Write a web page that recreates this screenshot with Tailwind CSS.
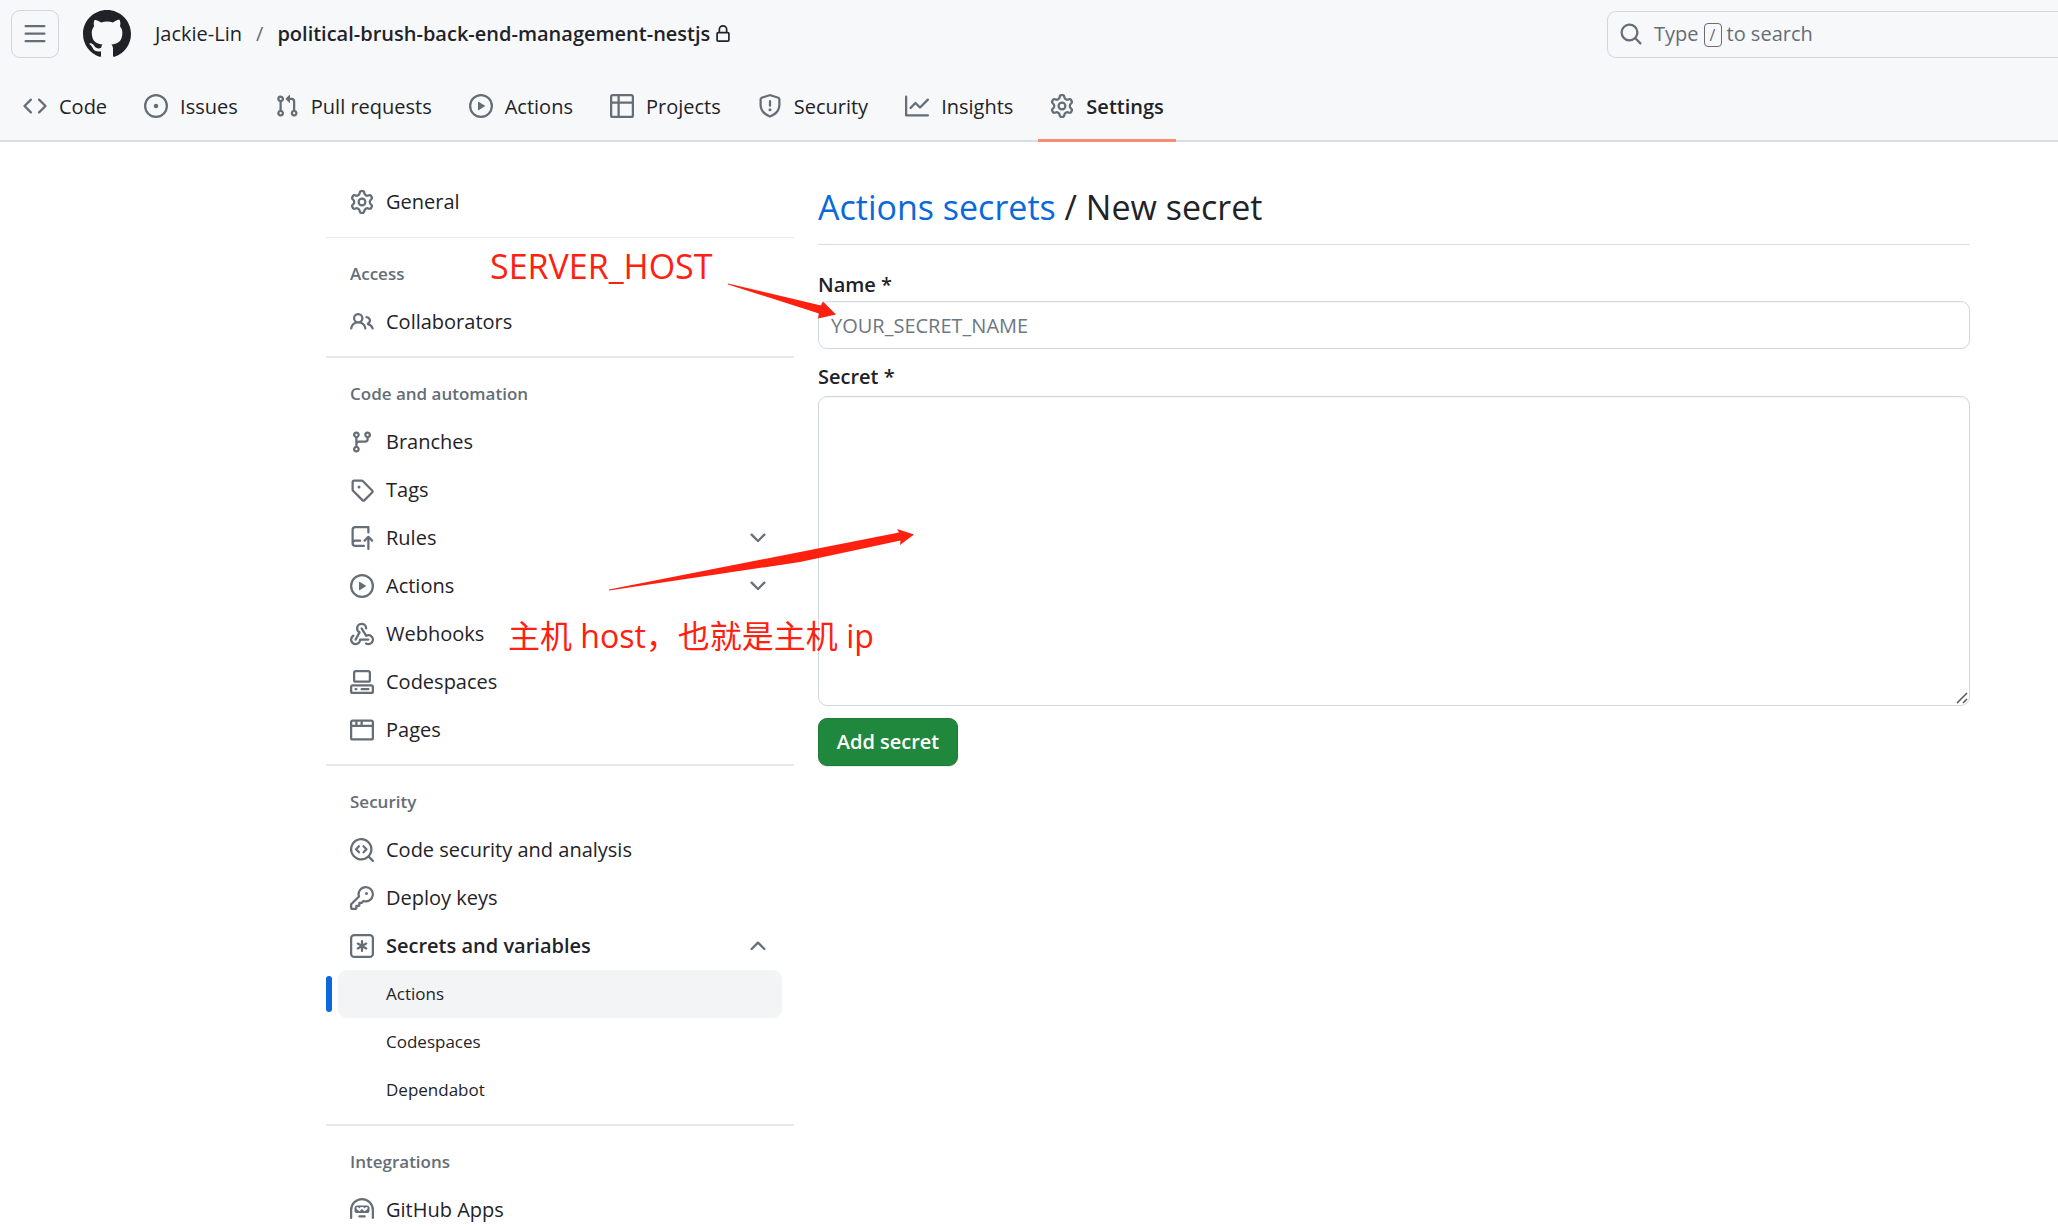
<!DOCTYPE html>
<html lang="en">
<head>
<meta charset="utf-8">
<title>Actions secrets / New secret</title>
<script src="https://cdn.jsdelivr.net/npm/@tailwindcss/browser@4"></script>
</head>
<body class="min-h-screen bg-white font-['Open_Sans','Noto_Sans_CJK_SC',sans-serif] text-[20px] leading-[30px] text-[#1f2328]">
<svg class="hidden" aria-hidden="true">
  <symbol id="bars" viewBox="0 0 16 16"><path d="M1 2.75A.75.75 0 0 1 1.75 2h12.5a.75.75 0 0 1 0 1.500H1.750A.75.75 0 0 1 1 2.750Zm0 5A.75.75 0 0 1 1.750 7h12.500a.75.75 0 0 1 0 1.500H1.750A.75.75 0 0 1 1 7.750ZM1.750 12h12.500a.75.75 0 0 1 0 1.500H1.750a.75.75 0 0 1 0-1.500Z"/></symbol>
  <symbol id="mark" viewBox="0 0 16 16"><path d="M8 0c4.420 0 8 3.580 8 8a8.013 8.013 0 0 1-5.450 7.590c-.4.080-.55-.17-.55-.38 0-.27.01-1.130.01-2.200 0-.75-.25-1.230-.54-1.480 1.780-.2 3.650-.88 3.650-3.950 0-.88-.31-1.590-.82-2.150.08-.2.36-1.020-.08-2.120 0 0-.67-.22-2.200.82-.64-.18-1.320-.27-2-.27-.68 0-1.360.09-2 .27-1.530-1.030-2.200-.82-2.200-.82-.44 1.100-.16 1.920-.08 2.120-.51.56-.82 1.280-.82 2.150 0 3.060 1.860 3.750 3.640 3.950-.23.2-.44.55-.51 1.070-.46.21-1.610.55-2.330-.66-.15-.24-.6-.83-1.230-.82-.67.01-.27.38.01.53.34.19.73.9.82 1.130.16.45.68 1.310 2.690.94 0 .67.01 1.300.01 1.490 0 .21-.15.45-.55.38A7.995 7.995 0 0 1 0 8c0-4.420 3.580-8 8-8Z"/></symbol>
  <symbol id="code" viewBox="0 0 16 16"><path d="m11.28 3.22 4.250 4.250a.75.75 0 0 1 0 1.060l-4.250 4.250a.749.749 0 0 1-1.275-.326.749.749 0 0 1 .215-.734L13.940 8l-3.720-3.720a.749.749 0 0 1 .326-1.275.749.749 0 0 1 .734.215Zm-6.560 0a.751.751 0 0 1 1.042.018.751.751 0 0 1 .018 1.042L2.060 8l3.720 3.720a.749.749 0 0 1-.326 1.275.749.749 0 0 1-.734-.215L.47 8.530a.75.75 0 0 1 0-1.060Z"/></symbol>
  <symbol id="issue" viewBox="0 0 16 16"><path d="M8 9.500a1.500 1.500 0 1 0 0-3 1.500 1.500 0 0 0 0 3Z"/><path d="M8 0a8 8 0 1 1 0 16A8 8 0 0 1 8 0ZM1.500 8a6.500 6.500 0 1 0 13 0 6.500 6.500 0 0 0-13 0Z"/></symbol>
  <symbol id="pr" viewBox="0 0 16 16"><path d="M1.500 3.250a2.250 2.250 0 1 1 3 2.122v5.256a2.251 2.251 0 1 1-1.500 0V5.372A2.250 2.250 0 0 1 1.500 3.250Zm5.677-.177L9.573.677A.25.25 0 0 1 10 .854V2.500h1A2.500 2.500 0 0 1 13.500 5v5.628a2.251 2.251 0 1 1-1.500 0V5a1 1 0 0 0-1-1h-1v1.646a.25.25 0 0 1-.427.177L7.177 3.427a.25.25 0 0 1 0-.354ZM3.750 2.500a.75.75 0 1 0 0 1.500.75.75 0 0 0 0-1.500Zm0 9.500a.75.75 0 1 0 0 1.500.75.75 0 0 0 0-1.500Zm8.250.75a.75.75 0 1 0 1.500 0 .75.75 0 0 0-1.500 0Z"/></symbol>
  <symbol id="play" viewBox="0 0 16 16"><path d="M8 0a8 8 0 1 1 0 16A8 8 0 0 1 8 0ZM1.500 8a6.500 6.500 0 1 0 13 0 6.500 6.500 0 0 0-13 0Zm4.879-2.773 4.264 2.559a.25.25 0 0 1 0 .428l-4.264 2.559A.25.25 0 0 1 6 10.559V5.442a.25.25 0 0 1 .379-.215Z"/></symbol>
  <symbol id="table" viewBox="0 0 16 16"><path d="M0 1.750C0 .784.784 0 1.750 0h12.500C15.216 0 16 .784 16 1.750v12.500A1.750 1.750 0 0 1 14.250 16H1.750A1.750 1.750 0 0 1 0 14.250ZM6.500 6.500v8h7.750a.25.25 0 0 0 .25-.25V6.500Zm8-1.500V1.750a.25.25 0 0 0-.25-.25H6.500V5Zm-13 1.500v7.750c0 .138.112.25.25.25H5v-8ZM5 5V1.500H1.750a.25.25 0 0 0-.25.25V5Z"/></symbol>
  <symbol id="shield" viewBox="0 0 16 16"><path d="M7.467.133a1.748 1.748 0 0 1 1.066 0l5.250 1.680A1.750 1.750 0 0 1 15 3.480V7c0 1.566-.32 3.182-1.303 4.682-.983 1.498-2.585 2.813-5.032 3.855a1.697 1.697 0 0 1-1.330 0c-2.447-1.042-4.049-2.357-5.032-3.855C1.320 10.182 1 8.566 1 7V3.480a1.755 1.755 0 0 1 1.217-1.667Zm.61 1.429a.25.25 0 0 0-.153 0l-5.250 1.680a.25.25 0 0 0-.174.238V7c0 1.358.275 2.666 1.057 3.860.784 1.194 2.121 2.340 4.366 3.297a.196.196 0 0 0 .154 0c2.245-.956 3.582-2.104 4.366-3.298C13.225 9.666 13.500 8.360 13.500 7V3.480a.251.251 0 0 0-.174-.237l-5.250-1.680ZM8.750 4.750v3a.75.75 0 0 1-1.500 0v-3a.75.75 0 0 1 1.500 0ZM9 10.500a1 1 0 1 1-2 0 1 1 0 0 1 2 0Z"/></symbol>
  <symbol id="graph" viewBox="0 0 16 16"><path d="M1.500 1.750V13.500h13.750a.75.75 0 0 1 0 1.500H.75a.75.75 0 0 1-.75-.75V1.750a.75.75 0 0 1 1.500 0Zm14.280 2.530-5.250 5.250a.75.75 0 0 1-1.060 0L7 7.060 4.280 9.780a.751.751 0 0 1-1.042-.018.751.751 0 0 1-.018-1.042l3.250-3.250a.75.75 0 0 1 1.060 0L10 7.940l4.720-4.720a.751.751 0 0 1 1.042.018.751.751 0 0 1 .018 1.042Z"/></symbol>
  <symbol id="gear" viewBox="0 0 16 16"><path d="M8 0a8.200 8.200 0 0 1 .701.031C9.444.095 9.990.645 10.160 1.290l.288 1.107c.018.066.079.158.212.224.231.114.454.243.668.386.123.082.233.090.299.071l1.103-.303c.644-.176 1.392.021 1.820.630.270.385.506.792.704 1.218.315.675.111 1.422-.364 1.891l-.814.806c-.049.048-.098.147-.088.294.016.257.016.515 0 .772-.010.147.038.246.088.294l.814.806c.475.469.679 1.216.364 1.891a7.977 7.977 0 0 1-.704 1.217c-.428.610-1.176.807-1.820.630l-1.102-.302c-.067-.019-.177-.011-.300.071a5.909 5.909 0 0 1-.668.386c-.133.066-.194.158-.211.224l-.290 1.106c-.168.646-.715 1.196-1.458 1.260a8.006 8.006 0 0 1-1.402 0c-.743-.064-1.289-.614-1.458-1.260l-.289-1.106c-.018-.066-.079-.158-.212-.224a5.738 5.738 0 0 1-.668-.386c-.123-.082-.233-.090-.299-.071l-1.103.303c-.644.176-1.392-.021-1.820-.630a8.120 8.120 0 0 1-.704-1.218c-.315-.675-.111-1.422.363-1.891l.815-.806c.050-.048.098-.147.088-.294a6.214 6.214 0 0 1 0-.772c.010-.147-.038-.246-.088-.294l-.815-.806C.635 6.045.431 5.298.746 4.623a7.920 7.920 0 0 1 .704-1.217c.428-.610 1.176-.807 1.820-.630l1.102.302c.067.019.177.011.300-.071.214-.143.437-.272.668-.386.133-.066.194-.158.211-.224l.290-1.106C6.009.645 6.556.095 7.299.030 7.530.010 7.764 0 8 0Zm-.571 1.525c-.036.003-.108.036-.137.146l-.289 1.105c-.147.561-.549.967-.998 1.189-.173.086-.340.183-.500.290-.417.278-.970.423-1.529.270l-1.103-.303c-.109-.030-.175.016-.195.045-.220.312-.412.644-.573.990-.014.031-.021.110.059.190l.815.806c.411.406.562.957.530 1.456a4.709 4.709 0 0 0 0 .582c.032.499-.119 1.050-.530 1.456l-.815.806c-.081.080-.073.159-.059.190.162.346.353.677.573.989.020.030.085.076.195.046l1.102-.303c.560-.153 1.113-.008 1.530.270.161.107.328.204.501.290.447.222.850.629.997 1.189l.289 1.105c.029.109.101.143.137.146a6.600 6.600 0 0 0 1.142 0c.036-.003.108-.036.137-.146l.289-1.105c.147-.561.549-.967.998-1.189.173-.086.340-.183.500-.290.417-.278.970-.423 1.529-.270l1.103.303c.109.029.175-.016.195-.045.220-.313.411-.644.573-.990.014-.031.021-.110-.059-.190l-.815-.806c-.411-.406-.562-.957-.530-1.456a4.709 4.709 0 0 0 0-.582c-.032-.499.119-1.050.530-1.456l.815-.806c.081-.080.073-.159.059-.190a6.464 6.464 0 0 0-.573-.989c-.020-.030-.085-.076-.195-.046l-1.102.303c-.560.153-1.113.008-1.530-.270a4.440 4.440 0 0 0-.501-.290c-.447-.222-.850-.629-.997-1.189l-.289-1.105c-.029-.110-.101-.143-.137-.146a6.600 6.600 0 0 0-1.142 0ZM11 8a3 3 0 1 1-6 0 3 3 0 0 1 6 0ZM9.500 8a1.500 1.500 0 1 0-3.001.001A1.500 1.500 0 0 0 9.500 8Z"/></symbol>
  <symbol id="lock" viewBox="0 0 16 16"><path d="M4 4a4 4 0 0 1 8 0v2h.250c.966 0 1.750.784 1.750 1.750v5.500A1.750 1.750 0 0 1 12.250 15h-8.500A1.750 1.750 0 0 1 2 13.250v-5.500C2 6.784 2.784 6 3.750 6H4Zm8.250 3.500h-8.500a.25.25 0 0 0-.25.250v5.500c0 .138.112.250.250.250h8.500a.25.25 0 0 0 .250-.250v-5.500a.25.25 0 0 0-.250-.250ZM10.500 6V4a2.500 2.500 0 1 0-5 0v2Z"/></symbol>
  <symbol id="search" viewBox="0 0 16 16"><path d="M10.680 11.740a6 6 0 0 1-7.922-8.982 6 6 0 0 1 8.982 7.922l3.040 3.040a.749.749 0 0 1-.326 1.275.749.749 0 0 1-.734-.215ZM11.500 7a4.499 4.499 0 1 0-8.997 0A4.499 4.499 0 0 0 11.500 7Z"/></symbol>
  <symbol id="people" viewBox="0 0 16 16"><path d="M2 5.500a3.500 3.500 0 1 1 5.898 2.549 5.508 5.508 0 0 1 3.034 4.084.75.75 0 1 1-1.482.235 4 4 0 0 0-7.900 0 .75.75 0 0 1-1.482-.236A5.507 5.507 0 0 1 3.102 8.050 3.493 3.493 0 0 1 2 5.500ZM11 4a3.001 3.001 0 0 1 2.220 5.018 5.010 5.010 0 0 1 2.560 3.012.749.749 0 0 1-.885.954.752.752 0 0 1-.549-.514 3.507 3.507 0 0 0-2.522-2.372.75.75 0 0 1-.574-.730v-.352a.75.75 0 0 1 .416-.672A1.500 1.500 0 0 0 11 5.500.75.75 0 0 1 11 4Zm-5.500-.500a2 2 0 1 0-.001 3.999A2 2 0 0 0 5.500 3.500Z"/></symbol>
  <symbol id="branch" viewBox="0 0 16 16"><path d="M9.500 3.250a2.250 2.250 0 1 1 3 2.122V6A2.500 2.500 0 0 1 10 8.500H6a1 1 0 0 0-1 1v1.128a2.251 2.251 0 1 1-1.500 0V5.372a2.250 2.250 0 1 1 1.500 0v1.836A2.493 2.493 0 0 1 6 7h4a1 1 0 0 0 1-1v-.628A2.250 2.250 0 0 1 9.500 3.250Zm-6 0a.75.75 0 1 0 1.500 0 .75.75 0 0 0-1.500 0Zm8.250-.750a.75.75 0 1 0 0 1.500.75.75 0 0 0 0-1.500ZM4.250 12a.75.75 0 1 0 0 1.500.75.75 0 0 0 0-1.500Z"/></symbol>
  <symbol id="tag" viewBox="0 0 16 16"><path d="M1 7.775V2.750C1 1.784 1.784 1 2.750 1h5.025c.464 0 .910.184 1.238.513l6.250 6.250a1.750 1.750 0 0 1 0 2.474l-5.026 5.026a1.750 1.750 0 0 1-2.474 0l-6.250-6.250A1.752 1.752 0 0 1 1 7.775Zm1.500 0c0 .066.026.130.073.177l6.250 6.250a.25.25 0 0 0 .354 0l5.025-5.025a.25.25 0 0 0 0-.354l-6.250-6.250a.25.25 0 0 0-.177-.073H2.750a.25.25 0 0 0-.250.250ZM6 5a1 1 0 1 1 0 2 1 1 0 0 1 0-2Z"/></symbol>
  <symbol id="push" viewBox="0 0 16 16"><path d="M1 2.500A2.500 2.500 0 0 1 3.500 0h8.750a.75.75 0 0 1 .750.750v3.500a.75.75 0 0 1-1.500 0V1.500h-8a1 1 0 0 0-1 1v6.708A2.493 2.493 0 0 1 3.500 9h3.250a.75.75 0 0 1 0 1.500H3.500a1 1 0 0 0 0 2h5.750a.75.75 0 0 1 0 1.500H3.500A2.500 2.500 0 0 1 1 11.500Zm13.230 7.790h-.001l-1.224-1.224v6.184a.75.75 0 0 1-1.500 0V9.066L10.280 10.290a.75.75 0 0 1-1.060-1.061l2.505-2.504a.75.75 0 0 1 1.060 0L15.290 9.230a.751.751 0 0 1-.018 1.042.751.751 0 0 1-1.042.018Z"/></symbol>
  <symbol id="webhook" viewBox="0 0 16 16"><path d="M5.500 4.250a2.250 2.250 0 0 1 4.500 0 .75.75 0 0 0 1.500 0 3.750 3.750 0 1 0-6.140 2.889l-2.272 4.258a.75.75 0 0 0 1.324.706L7 7.250a.75.75 0 0 0-.309-1.015A2.250 2.250 0 0 1 5.500 4.250Z"/><path d="M7.364 3.607a.75.75 0 0 1 1.030.257l2.608 4.349a3.750 3.750 0 1 1-.628 6.785.75.75 0 0 1 .752-1.299 2.250 2.250 0 1 0-.033-3.880.75.75 0 0 1-1.030-.256L7.107 4.636a.75.75 0 0 1 .257-1.030Z"/><path d="M2.900 8.776A.75.75 0 0 1 2.625 9.800 2.250 2.250 0 1 0 6 11.750a.75.75 0 0 1 .750-.751h5.500a.75.75 0 0 1 0 1.500H7.425a3.751 3.751 0 1 1-5.550-3.998.75.75 0 0 1 1.024.274Z"/></symbol>
  <symbol id="codespaces" viewBox="0 0 16 16"><path d="M0 11.250c0-.966.784-1.750 1.750-1.750h12.500c.966 0 1.750.784 1.750 1.750v3A1.750 1.750 0 0 1 14.250 16H1.750A1.750 1.750 0 0 1 0 14.250Zm2-9.500C2 .784 2.784 0 3.750 0h8.500C13.216 0 14 .784 14 1.750v5a1.750 1.750 0 0 1-1.750 1.750h-8.500A1.750 1.750 0 0 1 2 6.750Zm1.750-.250a.25.25 0 0 0-.250.250v5c0 .138.112.250.250.250h8.500a.25.25 0 0 0 .250-.250v-5a.25.25 0 0 0-.250-.250Zm-2 9.500a.25.25 0 0 0-.250.250v3c0 .138.112.250.250.250h12.500a.25.25 0 0 0 .250-.250v-3a.25.25 0 0 0-.250-.250Z"/><path d="M7 12.750a.75.75 0 0 1 .750-.750h4.500a.75.75 0 0 1 0 1.500h-4.500a.75.75 0 0 1-.750-.750Zm-4 0a.75.75 0 0 1 .750-.750h.500a.75.75 0 0 1 0 1.500h-.500a.75.75 0 0 1-.750-.750Z"/></symbol>
  <symbol id="browser" viewBox="0 0 16 16"><path d="M0 2.750C0 1.784.784 1 1.750 1h12.500c.966 0 1.750.784 1.750 1.750v10.500A1.750 1.750 0 0 1 14.250 15H1.750A1.750 1.750 0 0 1 0 13.250ZM14.500 6h-13v7.250c0 .138.112.250.250.250h12.500a.25.25 0 0 0 .250-.250Zm-6-3.500v2h6V2.750a.25.25 0 0 0-.250-.250ZM5 2.500v2h2v-2Zm-3.250 0a.25.25 0 0 0-.250.250V4.500h2v-2Z"/></symbol>
  <symbol id="codescan" viewBox="0 0 16 16"><path d="M8.470 4.970a.75.75 0 0 0 0 1.060L9.940 7.500 8.470 8.970a.75.75 0 1 0 1.060 1.060l2-2a.75.75 0 0 0 0-1.060l-2-2a.75.75 0 0 0-1.060 0ZM6.530 6.030a.75.75 0 0 0-1.060-1.060l-2 2a.75.75 0 0 0 0 1.060l2 2a.75.75 0 1 0 1.060-1.060L5.060 7.500l1.470-1.470Z"/><path d="M12.246 13.307a7.501 7.501 0 1 1 1.060-1.060l2.474 2.473a.749.749 0 0 1-.326 1.275.749.749 0 0 1-.734-.215ZM1.500 7.500a6.002 6.002 0 0 0 3.608 5.504 6.002 6.002 0 0 0 6.486-1.117.748.748 0 0 1 .292-.293A6 6 0 1 0 1.500 7.500Z"/></symbol>
  <symbol id="key" viewBox="0 0 16 16"><path d="M10.500 0a5.499 5.499 0 1 1-1.288 10.848l-.932.932a.749.749 0 0 1-.530.220H7v.750a.749.749 0 0 1-.220.530l-.500.500a.749.749 0 0 1-.530.220H5v.750a.749.749 0 0 1-.220.530l-.500.500a.749.749 0 0 1-.530.220h-2A1.750 1.750 0 0 1 0 14.250v-2c0-.199.079-.389.220-.530l4.932-4.932A5.500 5.500 0 0 1 10.500 0Zm-4 5.500c-.001.431.069.860.205 1.269a.75.75 0 0 1-.181.768L1.500 12.560v1.690c0 .138.112.250.250.250h1.690l.060-.060v-1.190a.75.75 0 0 1 .750-.750h1.190l.060-.060v-1.190a.75.75 0 0 1 .750-.750h1.190l1.023-1.025a.75.75 0 0 1 .768-.180A4 4 0 1 0 6.500 5.500ZM11 6a1 1 0 1 1 0-2 1 1 0 0 1 0 2Z"/></symbol>
  <symbol id="asterisk" viewBox="0 0 16 16"><path d="M0 2.750A2.750 2.750 0 0 1 2.750 0h10.500A2.750 2.750 0 0 1 16 2.750v10.500A2.750 2.750 0 0 1 13.250 16H2.750A2.750 2.750 0 0 1 0 13.250ZM2.750 1.500c-.690 0-1.250.560-1.250 1.250v10.500c0 .690.560 1.250 1.250 1.250h10.500c.690 0 1.250-.560 1.250-1.250V2.750c0-.690-.560-1.250-1.250-1.250Z"/><path d="M8 4a.75.75 0 0 1 .750.750V6.700l1.690-.975a.75.75 0 0 1 .750 1.300L9.500 8l1.690.976a.75.75 0 0 1-.750 1.298L8.750 9.300v1.951a.75.75 0 0 1-1.500 0V9.299l-1.690.976a.75.75 0 0 1-.750-1.300L6.500 8l-1.690-.975a.75.75 0 0 1 .750-1.300l1.690.976V4.750A.75.75 0 0 1 8 4Z"/></symbol>
  <symbol id="hubot" viewBox="0 0 16 16"><path d="M0 8a8 8 0 1 1 16 0v5.250a.75.75 0 0 1-1.500 0V8a6.500 6.500 0 1 0-13 0v5.250a.75.75 0 0 1-1.500 0Zm5.500 4.250a.75.75 0 0 1 .750-.750h3.500a.75.75 0 0 1 0 1.500h-3.500a.75.75 0 0 1-.750-.750ZM3 6.750C3 5.784 3.784 5 4.750 5h6.500c.966 0 1.750.784 1.750 1.750v1.500A1.750 1.750 0 0 1 11.250 10h-6.500A1.750 1.750 0 0 1 3 8.250Zm1.470-.530a.75.75 0 0 0 0 1.060l1.250 1.250a.75.75 0 0 0 1.060 0L8 7.310l1.220 1.220a.75.75 0 0 0 1.060 0l1.250-1.250a.75.75 0 1 0-1.060-1.060l-.720.720-.720-.720a.75.75 0 0 0-.530-.220h-1a.75.75 0 0 0-.530.220l-.720.720-.720-.720a.75.75 0 0 0-1.060 0Z"/></symbol>
  <symbol id="down" viewBox="0 0 16 16"><path d="M12.780 5.220a.749.749 0 0 1 0 1.060l-4.250 4.250a.749.749 0 0 1-1.060 0L3.220 6.280a.749.749 0 1 1 1.060-1.060L8 8.939l3.720-3.719a.749.749 0 0 1 1.060 0Z"/></symbol>
  <symbol id="up" viewBox="0 0 16 16"><path d="M3.220 10.530a.749.749 0 0 1 0-1.060l4.250-4.250a.749.749 0 0 1 1.060 0l4.250 4.250a.749.749 0 1 1-1.060 1.060L8 6.811 4.280 10.530a.749.749 0 0 1-1.060 0Z"/></symbol>
</svg>

<div class="relative overflow-hidden">
<header class="border-b-2 border-[#d8dee4] bg-[#f6f8fa]">
  <div class="flex items-center justify-between pt-[10px] pl-[11px]">
    <div class="flex items-center">
      <button type="button" aria-label="Open menu" class="flex size-12 items-center justify-center rounded-[9px] border border-[#d0d7de] text-[#656d76]"><svg class="size-6 fill-current"><use href="#bars"/></svg></button>
      <a href="#" aria-label="Homepage" class="ml-6"><svg class="size-12 fill-[#1f2328]"><use href="#mark"/></svg></a>
      <nav aria-label="Breadcrumb" class="ml-6 flex items-center">
        <a href="#">Jackie-Lin</a>
        <span class="mx-[14px] text-[#656d76]">/</span>
        <a href="#" class="font-semibold">political-brush-back-end-management-nestjs</a>
        <svg class="ml-1 size-[18px] fill-[#1f2328]"><use href="#lock"/></svg>
      </nav>
    </div>
    <button type="button" class="flex h-[47px] w-[451px] items-center rounded-l-[9px] border border-r-0 border-[#d0d7de] pl-[11px] text-[#656d76]">
      <svg class="mr-[11px] size-6 fill-current"><use href="#search"/></svg>
      <span>Type</span><kbd class="mx-[5px] mt-[2px] flex h-6 w-[18px] items-center justify-center rounded-[4px] border border-[#656d76] font-['Open_Sans',sans-serif] text-[16px]">/</kbd><span>to search</span>
    </button>
  </div>
  <nav aria-label="Repository" class="flex gap-[13px] pt-6 pl-[11px]">
    <a href="#" class="flex h-[58px] items-start gap-3 px-3 pt-[10px]"><svg class="mt-[2px] size-6 fill-[#656d76]"><use href="#code"/></svg>Code</a>
    <a href="#" class="flex h-[58px] items-start gap-3 px-3 pt-[10px]"><svg class="mt-[2px] size-6 fill-[#656d76]"><use href="#issue"/></svg>Issues</a>
    <a href="#" class="flex h-[58px] items-start gap-3 px-3 pt-[10px]"><svg class="mt-[2px] size-6 fill-[#656d76]"><use href="#pr"/></svg>Pull requests</a>
    <a href="#" class="flex h-[58px] items-start gap-3 px-3 pt-[10px]"><svg class="mt-[2px] size-6 fill-[#656d76]"><use href="#play"/></svg>Actions</a>
    <a href="#" class="flex h-[58px] items-start gap-3 px-3 pt-[10px]"><svg class="mt-[2px] size-6 fill-[#656d76]"><use href="#table"/></svg>Projects</a>
    <a href="#" class="flex h-[58px] items-start gap-3 px-3 pt-[10px]"><svg class="mt-[2px] size-6 fill-[#656d76]"><use href="#shield"/></svg>Security</a>
    <a href="#" class="flex h-[58px] items-start gap-3 px-3 pt-[10px]"><svg class="mt-[2px] size-6 fill-[#656d76]"><use href="#graph"/></svg>Insights</a>
    <a href="#" aria-current="page" class="-mb-[2px] flex h-[60px] items-start gap-3 border-b-3 border-[#fd8c73] px-3 pt-[10px] font-semibold"><svg class="mt-[2px] size-6 fill-[#656d76]"><use href="#gear"/></svg>Settings</a>
  </nav>
</header>

<div class="flex gap-6 pt-9 pr-[88px] pl-[326px]">
  <nav aria-label="Settings" class="w-[468px] shrink-0">
    <a href="#" class="flex h-12 items-center gap-3 px-6"><svg class="size-6 fill-[#656d76]"><use href="#gear"/></svg>General</a>
    <section class="mt-[11px] border-t border-[#e6eaee] pt-3">
      <h2 class="flex h-12 items-center px-6 text-[17px] font-semibold text-[#656d76]">Access</h2>
      <a href="#" class="flex h-12 items-center gap-3 px-6"><svg class="size-6 fill-[#656d76]"><use href="#people"/></svg>Collaborators</a>
    </section>
    <section class="mt-[10px] border-t-2 border-[#e6eaee] pt-3">
      <h2 class="flex h-12 items-center px-6 text-[17px] font-semibold text-[#656d76]">Code and automation</h2>
      <a href="#" class="flex h-12 items-center gap-3 px-6"><svg class="size-6 fill-[#656d76]"><use href="#branch"/></svg>Branches</a>
      <a href="#" class="flex h-12 items-center gap-3 px-6"><svg class="size-6 fill-[#656d76]"><use href="#tag"/></svg>Tags</a>
      <button type="button" aria-expanded="false" class="flex h-12 w-full items-center gap-3 px-6"><svg class="size-6 fill-[#656d76]"><use href="#push"/></svg>Rules<svg class="ml-auto size-6 fill-[#656d76]"><use href="#down"/></svg></button>
      <button type="button" aria-expanded="false" class="flex h-12 w-full items-center gap-3 px-6"><svg class="size-6 fill-[#656d76]"><use href="#play"/></svg>Actions<svg class="ml-auto size-6 fill-[#656d76]"><use href="#down"/></svg></button>
      <a href="#" class="flex h-12 items-center gap-3 px-6"><svg class="size-6 fill-[#656d76]"><use href="#webhook"/></svg>Webhooks</a>
      <a href="#" class="flex h-12 items-center gap-3 px-6"><svg class="size-6 fill-[#656d76]"><use href="#codespaces"/></svg>Codespaces</a>
      <a href="#" class="flex h-12 items-center gap-3 px-6"><svg class="size-6 fill-[#656d76]"><use href="#browser"/></svg>Pages</a>
    </section>
    <section class="mt-[10px] border-t-2 border-[#e6eaee] pt-3">
      <h2 class="flex h-12 items-center px-6 text-[17px] font-semibold text-[#656d76]">Security</h2>
      <a href="#" class="flex h-12 items-center gap-3 px-6"><svg class="size-6 fill-[#656d76]"><use href="#codescan"/></svg>Code security and analysis</a>
      <a href="#" class="flex h-12 items-center gap-3 px-6"><svg class="size-6 fill-[#656d76]"><use href="#key"/></svg>Deploy keys</a>
      <button type="button" aria-expanded="true" class="flex h-12 w-full items-center gap-3 px-6 font-semibold"><svg class="size-6 fill-[#656d76]"><use href="#asterisk"/></svg>Secrets and variables<svg class="ml-auto size-6 fill-[#656d76]"><use href="#up"/></svg></button>
      <div class="flex h-12 items-center gap-[6px]"><span class="h-9 w-[6px] rounded-[3px] bg-[#0969da]"></span><a href="#" aria-current="page" class="mr-3 flex h-12 flex-1 items-center rounded-[9px] bg-[#f3f4f6] pl-12 text-[17px]">Actions</a></div>
      <a href="#" class="flex h-12 items-center pl-[60px] text-[17px]">Codespaces</a>
      <a href="#" class="flex h-12 items-center pl-[60px] text-[17px]">Dependabot</a>
    </section>
    <section class="mt-[10px] border-t-2 border-[#e6eaee] pt-3">
      <h2 class="flex h-12 items-center px-6 text-[17px] font-semibold text-[#656d76]">Integrations</h2>
      <a href="#" class="flex h-12 items-center gap-3 px-6"><svg class="size-6 fill-[#656d76]"><use href="#hubot"/></svg>GitHub Apps</a>
    </section>
  </nav>

  <main class="min-w-0 flex-1">
    <h1 class="border-b border-[#d8dee4] pt-1 pb-3 text-[34px] leading-[50px]"><a href="#" class="text-[#0969da]">Actions secrets</a> / New secret</h1>
    <form class="pt-[25px]">
      <label for="name" class="block h-[31px] font-semibold">Name *</label>
      <input id="name" type="text" placeholder="YOUR_SECRET_NAME" class="block h-12 w-full rounded-[9px] border border-[#d0d7de] px-3 shadow-[inset_0_1px_0_rgba(208,215,222,0.2)] placeholder:text-[#6e7781]">
      <label for="secret" class="mt-[13px] block h-[34px] font-semibold">Secret *</label>
      <div class="relative">
        <textarea id="secret" class="block h-[310px] w-full resize-none rounded-[9px] border border-[#d0d7de] px-3 py-2 shadow-[inset_0_1px_0_rgba(208,215,222,0.2)]"></textarea>
        <svg class="pointer-events-none absolute right-[2px] bottom-[2px] size-3" viewBox="0 0 12 12" fill="none" stroke="#555" stroke-width="1.500"><path d="M1 11 11 1M7 11l4-4"/></svg>
      </div>
      <button type="submit" class="mt-3 h-12 w-[140px] rounded-[9px] border border-[#1f7a37] bg-[#1f883d] font-semibold text-white shadow-[0_1px_0_rgba(31,35,40,0.1)]">Add secret</button>
    </form>
  </main>
</div>

<div class="pointer-events-none absolute top-0 left-0 text-[#ff2010]">
  <svg class="absolute top-0 left-0 h-[640px] w-[940px] fill-current"><path d="M728 283.500 821 305.500 823 301.500 836 314.500 818 318.500 819 313.500 728 284.500Z"/><path d="M609 589.500 899 532.500 897 529 914 534.500 900 545 900.500 540.500 800 562 609 590.500Z"/></svg>
  <p class="absolute top-[246px] left-[490px] text-[34px] leading-[40px] whitespace-nowrap">SERVER_HOST</p>
  <p class="absolute top-[614px] left-[508px] text-[32px] leading-[44px] whitespace-nowrap">主机 host，也就是主机 ip</p>
</div>
</div>
</body>
</html>
